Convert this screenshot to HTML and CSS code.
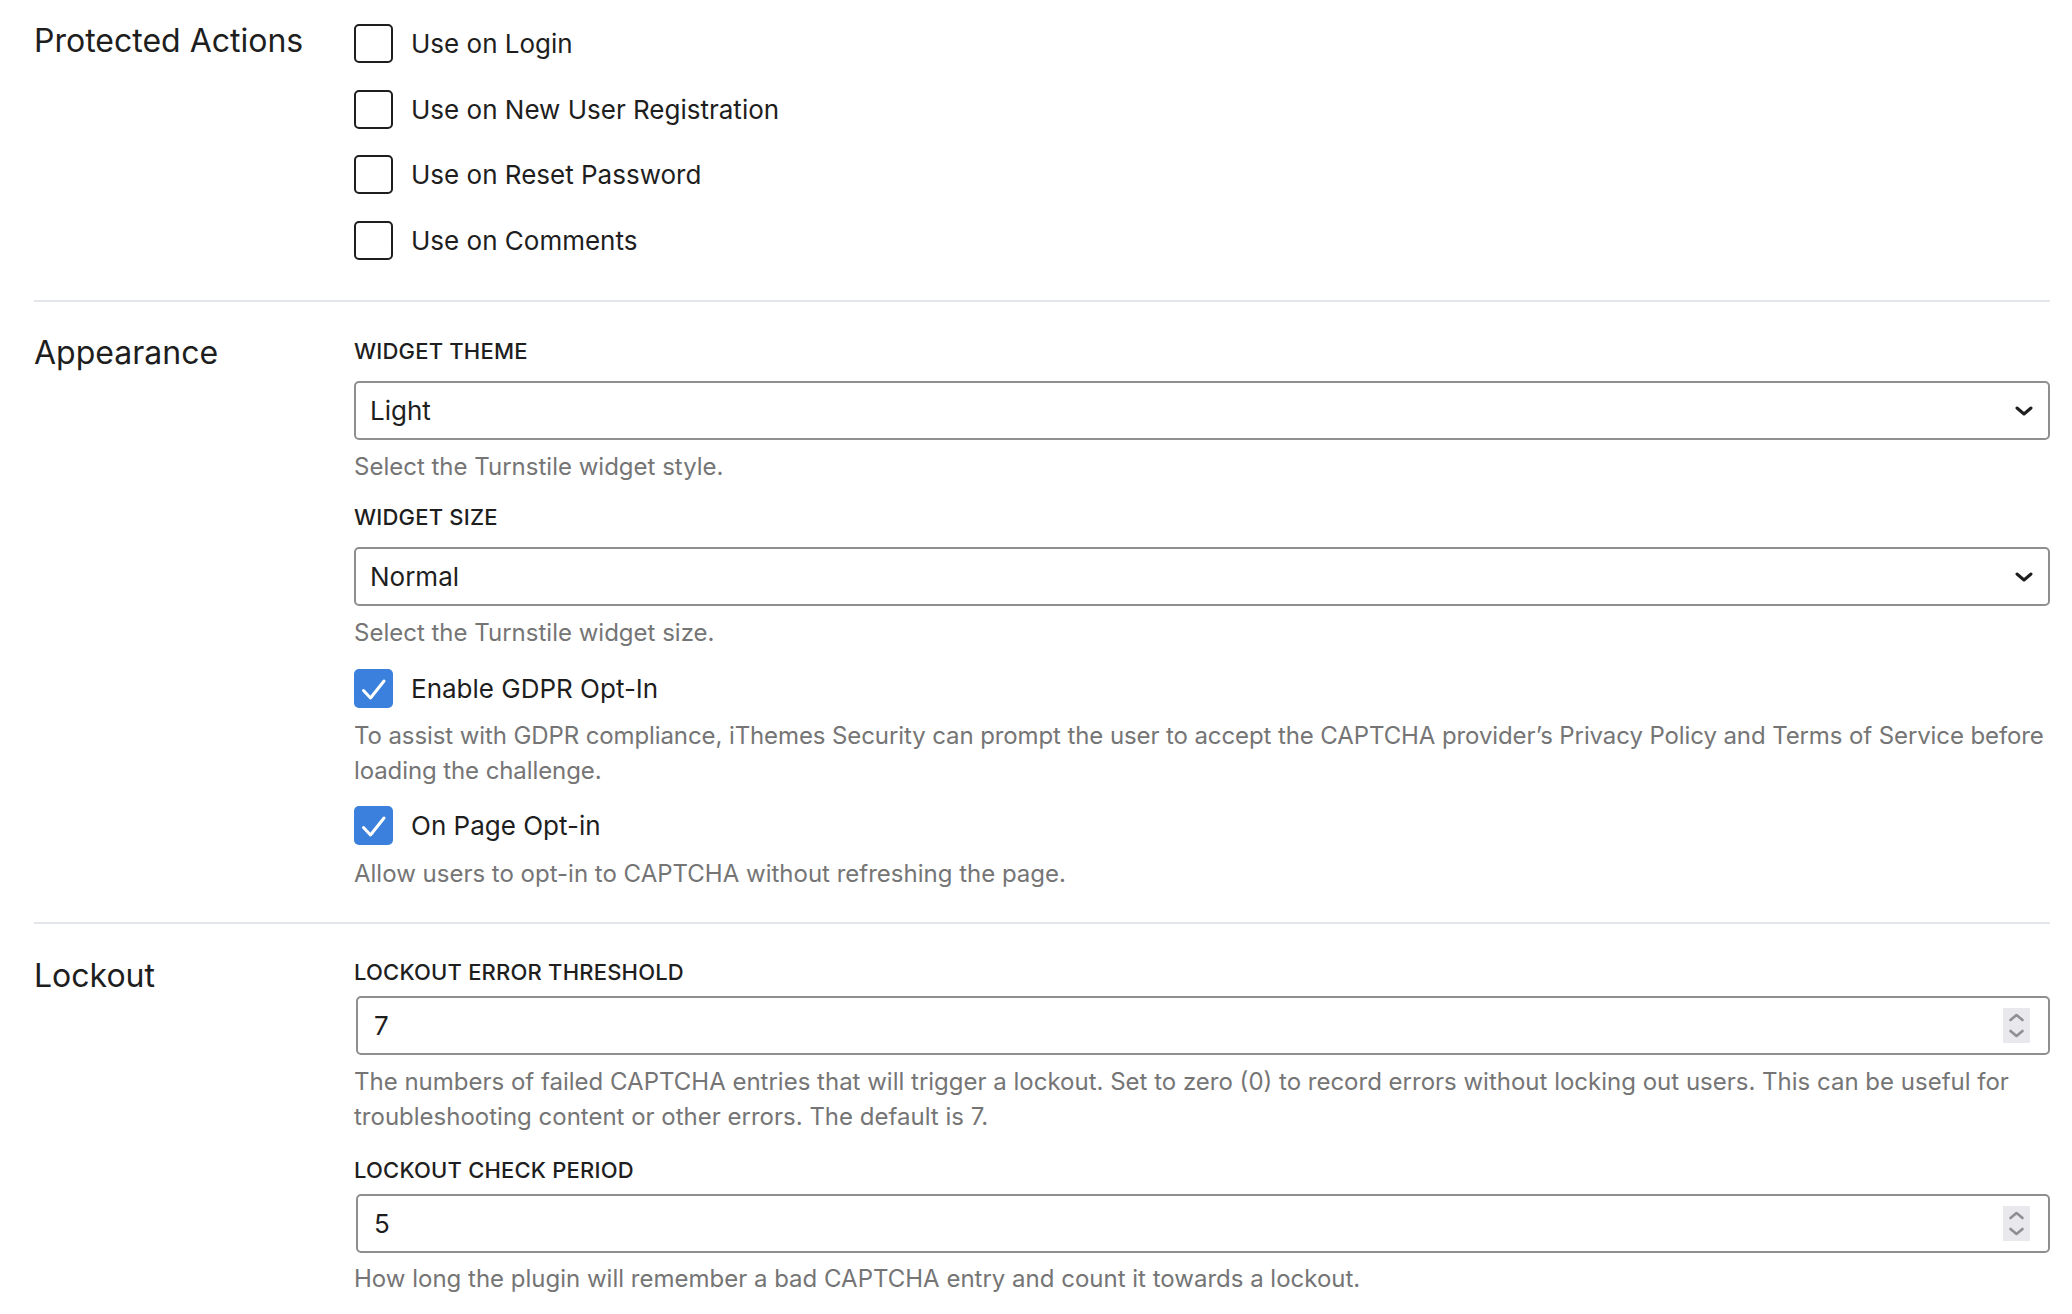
FILE: index.html
```html
<!DOCTYPE html>
<html lang="en">
<head>
<meta charset="utf-8">
<title>CAPTCHA Settings</title>
<link rel="stylesheet" href="styles.css">
</head>
<body>
<div class="page">
  <section class="sect first">
    <h2 class="sect-title">Protected Actions</h2>
    <div class="sect-body">
      <div class="check-list">
        <label class="check"><span class="box"></span><span class="check-label">Use on Login</span></label>
        <label class="check"><span class="box"></span><span class="check-label">Use on New User Registration</span></label>
        <label class="check"><span class="box"></span><span class="check-label">Use on Reset Password</span></label>
        <label class="check"><span class="box"></span><span class="check-label">Use on Comments</span></label>
      </div>
    </div>
  </section>

  <section class="sect mid">
    <h2 class="sect-title">Appearance</h2>
    <div class="sect-body">
      <label class="field-label">Widget Theme</label>
      <div class="select-wrap">
        <select class="select"><option>Light</option><option>Dark</option><option>Auto</option></select>
        <svg class="chev" width="18" height="10" viewBox="0 0 18 10"><path d="M2 2 L9 8 L16 2" fill="none" stroke="#1e1e1e" stroke-width="3" stroke-linecap="round" stroke-linejoin="round"/></svg>
      </div>
      <p class="help">Select the Turnstile widget style.</p>

      <label class="field-label next">Widget Size</label>
      <div class="select-wrap">
        <select class="select"><option>Normal</option><option>Compact</option></select>
        <svg class="chev" width="18" height="10" viewBox="0 0 18 10"><path d="M2 2 L9 8 L16 2" fill="none" stroke="#1e1e1e" stroke-width="3" stroke-linecap="round" stroke-linejoin="round"/></svg>
      </div>
      <p class="help">Select the Turnstile widget size.</p>

      <label class="check opt first-opt"><span class="box on"><svg width="39" height="39" viewBox="0 0 39 39"><path d="M9.5 21.5 L16.5 29 L30 12" fill="none" stroke="#fff" stroke-width="3" stroke-linecap="round" stroke-linejoin="round"/></svg></span><span class="check-label">Enable GDPR Opt-In</span></label>
      <p class="help opt-help tight">To assist with GDPR compliance, iThemes Security can prompt the user to accept the CAPTCHA provider’s Privacy Policy and Terms of Service before loading the challenge.</p>

      <label class="check opt"><span class="box on"><svg width="39" height="39" viewBox="0 0 39 39"><path d="M9.5 21.5 L16.5 29 L30 12" fill="none" stroke="#fff" stroke-width="3" stroke-linecap="round" stroke-linejoin="round"/></svg></span><span class="check-label">On Page Opt-in</span></label>
      <p class="help opt-help">Allow users to opt-in to CAPTCHA without refreshing the page.</p>
    </div>
  </section>

  <section class="sect last">
    <h2 class="sect-title">Lockout</h2>
    <div class="sect-body">
      <label class="field-label">Lockout Error Threshold</label>
      <div class="num">
        <input class="num-input" type="text" value="7">
        <span class="spin"><svg width="27" height="35" viewBox="0 0 27 35"><path d="M7.5 12 L13.5 7 L19.5 12" fill="none" stroke="#8e8e93" stroke-width="2.6" stroke-linecap="round" stroke-linejoin="round"/><path d="M7.5 23 L13.5 28 L19.5 23" fill="none" stroke="#8e8e93" stroke-width="2.6" stroke-linecap="round" stroke-linejoin="round"/></svg></span>
      </div>
      <p class="help num-help">The numbers of failed CAPTCHA entries that will trigger a lockout. Set to zero (0) to record errors without locking out users. This can be useful for troubleshooting content or other errors. The default is 7.</p>

      <label class="field-label next-lock">Lockout Check Period</label>
      <div class="num">
        <input class="num-input" type="text" value="5">
        <span class="spin"><svg width="27" height="35" viewBox="0 0 27 35"><path d="M7.5 12 L13.5 7 L19.5 12" fill="none" stroke="#8e8e93" stroke-width="2.6" stroke-linecap="round" stroke-linejoin="round"/><path d="M7.5 23 L13.5 28 L19.5 23" fill="none" stroke="#8e8e93" stroke-width="2.6" stroke-linecap="round" stroke-linejoin="round"/></svg></span>
      </div>
      <p class="help num-help">How long the plugin will remember a bad CAPTCHA entry and count it towards a lockout.</p>
    </div>
  </section>
</div>
</body>
</html>
```
FILE: styles.css
```css
html, body {
  margin: 0;
  background: #ffffff;
}

body {
  font-family: Inter, "Noto Sans", "Liberation Sans", sans-serif;
  color: #1e1e1e;
}

.page {
  padding: 0 22px 0 34px;
}

.sect {
  display: grid;
  grid-template-columns: 320px 1fr;
  padding: 31px 0 34px;
  border-top: 2px solid #e3e7eb;
}

.sect.first {
  border-top: none;
  padding-top: 21px;
  padding-bottom: 40px;
}

.sect.mid {
  padding-bottom: 31px;
}

.sect.last {
  padding-top: 32px;
  padding-bottom: 10px;
}

.sect-title {
  margin: 0;
  font-size: 32px;
  font-weight: 400;
  line-height: 40px;
  color: #1e1e1e;
}

.sect-body {
  padding-top: 3px;
  min-width: 0;
}

.sect.last .sect-body {
  padding-top: 1.7px;
}

.check-list {
  display: flex;
  flex-direction: column;
  gap: 26.6px;
}

.check {
  display: flex;
  align-items: center;
  gap: 18px;
  height: 39px;
  font-size: 26px;
  line-height: 39px;
  color: #1e1e1e;
}

.box {
  flex: none;
  width: 39px;
  height: 39px;
  box-sizing: border-box;
  border: 2.5px solid #1e1e1e;
  border-radius: 5px;
  background: #fff;
}

.box.on {
  border: none;
  background: #3b80dc;
  display: flex;
}

.field-label {
  display: block;
  font-size: 22px;
  font-weight: 500;
  line-height: 30px;
  text-transform: uppercase;
  letter-spacing: 0.2px;
  color: #1e1e1e;
}

.field-label.next {
  margin-top: 17.4px;
}

.field-label.next-lock {
  margin-top: 21px;
}

.select-wrap {
  position: relative;
  margin-top: 15.6px;
}

.select {
  display: block;
  width: 100%;
  height: 59px;
  box-sizing: border-box;
  margin: 0;
  padding: 0 50px 0 14px;
  border: 2px solid #8f8f8f;
  border-radius: 5px;
  background: #fff;
  font-family: Inter, "Noto Sans", "Liberation Sans", sans-serif;
  font-size: 26px;
  color: #1e1e1e;
  -webkit-appearance: none;
  appearance: none;
  outline: none;
}

.chev {
  position: absolute;
  right: 17px;
  top: 24.5px;
  pointer-events: none;
}

.help {
  margin: 8.9px 0 0;
  font-size: 24px;
  line-height: 35px;
  color: #757575;
}

.help.tight {
  letter-spacing: -0.1px;
}

.check.opt {
  margin-top: 18px;
}

.check.opt.first-opt {
  margin-top: 18.4px;
}

.help.opt-help {
  margin-top: 10.5px;
}

.num {
  display: flex;
  align-items: center;
  height: 59px;
  box-sizing: border-box;
  margin: 9px 0 0 2px;
  border: 2px solid #8f8f8f;
  border-radius: 5px;
  background: #fff;
  padding: 0 18px 0 0;
}

.num-input {
  flex: 1;
  min-width: 0;
  height: 100%;
  box-sizing: border-box;
  border: none;
  outline: none;
  background: transparent;
  padding: 0 0 0 16px;
  margin: 0;
  font-family: Inter, "Noto Sans", "Liberation Sans", sans-serif;
  font-size: 26px;
  color: #1e1e1e;
}

.spin {
  flex: none;
  display: flex;
  width: 27px;
  height: 35px;
  background: #e9e9ed;
}

.help.num-help {
  margin-top: 8.6px;
}
```
